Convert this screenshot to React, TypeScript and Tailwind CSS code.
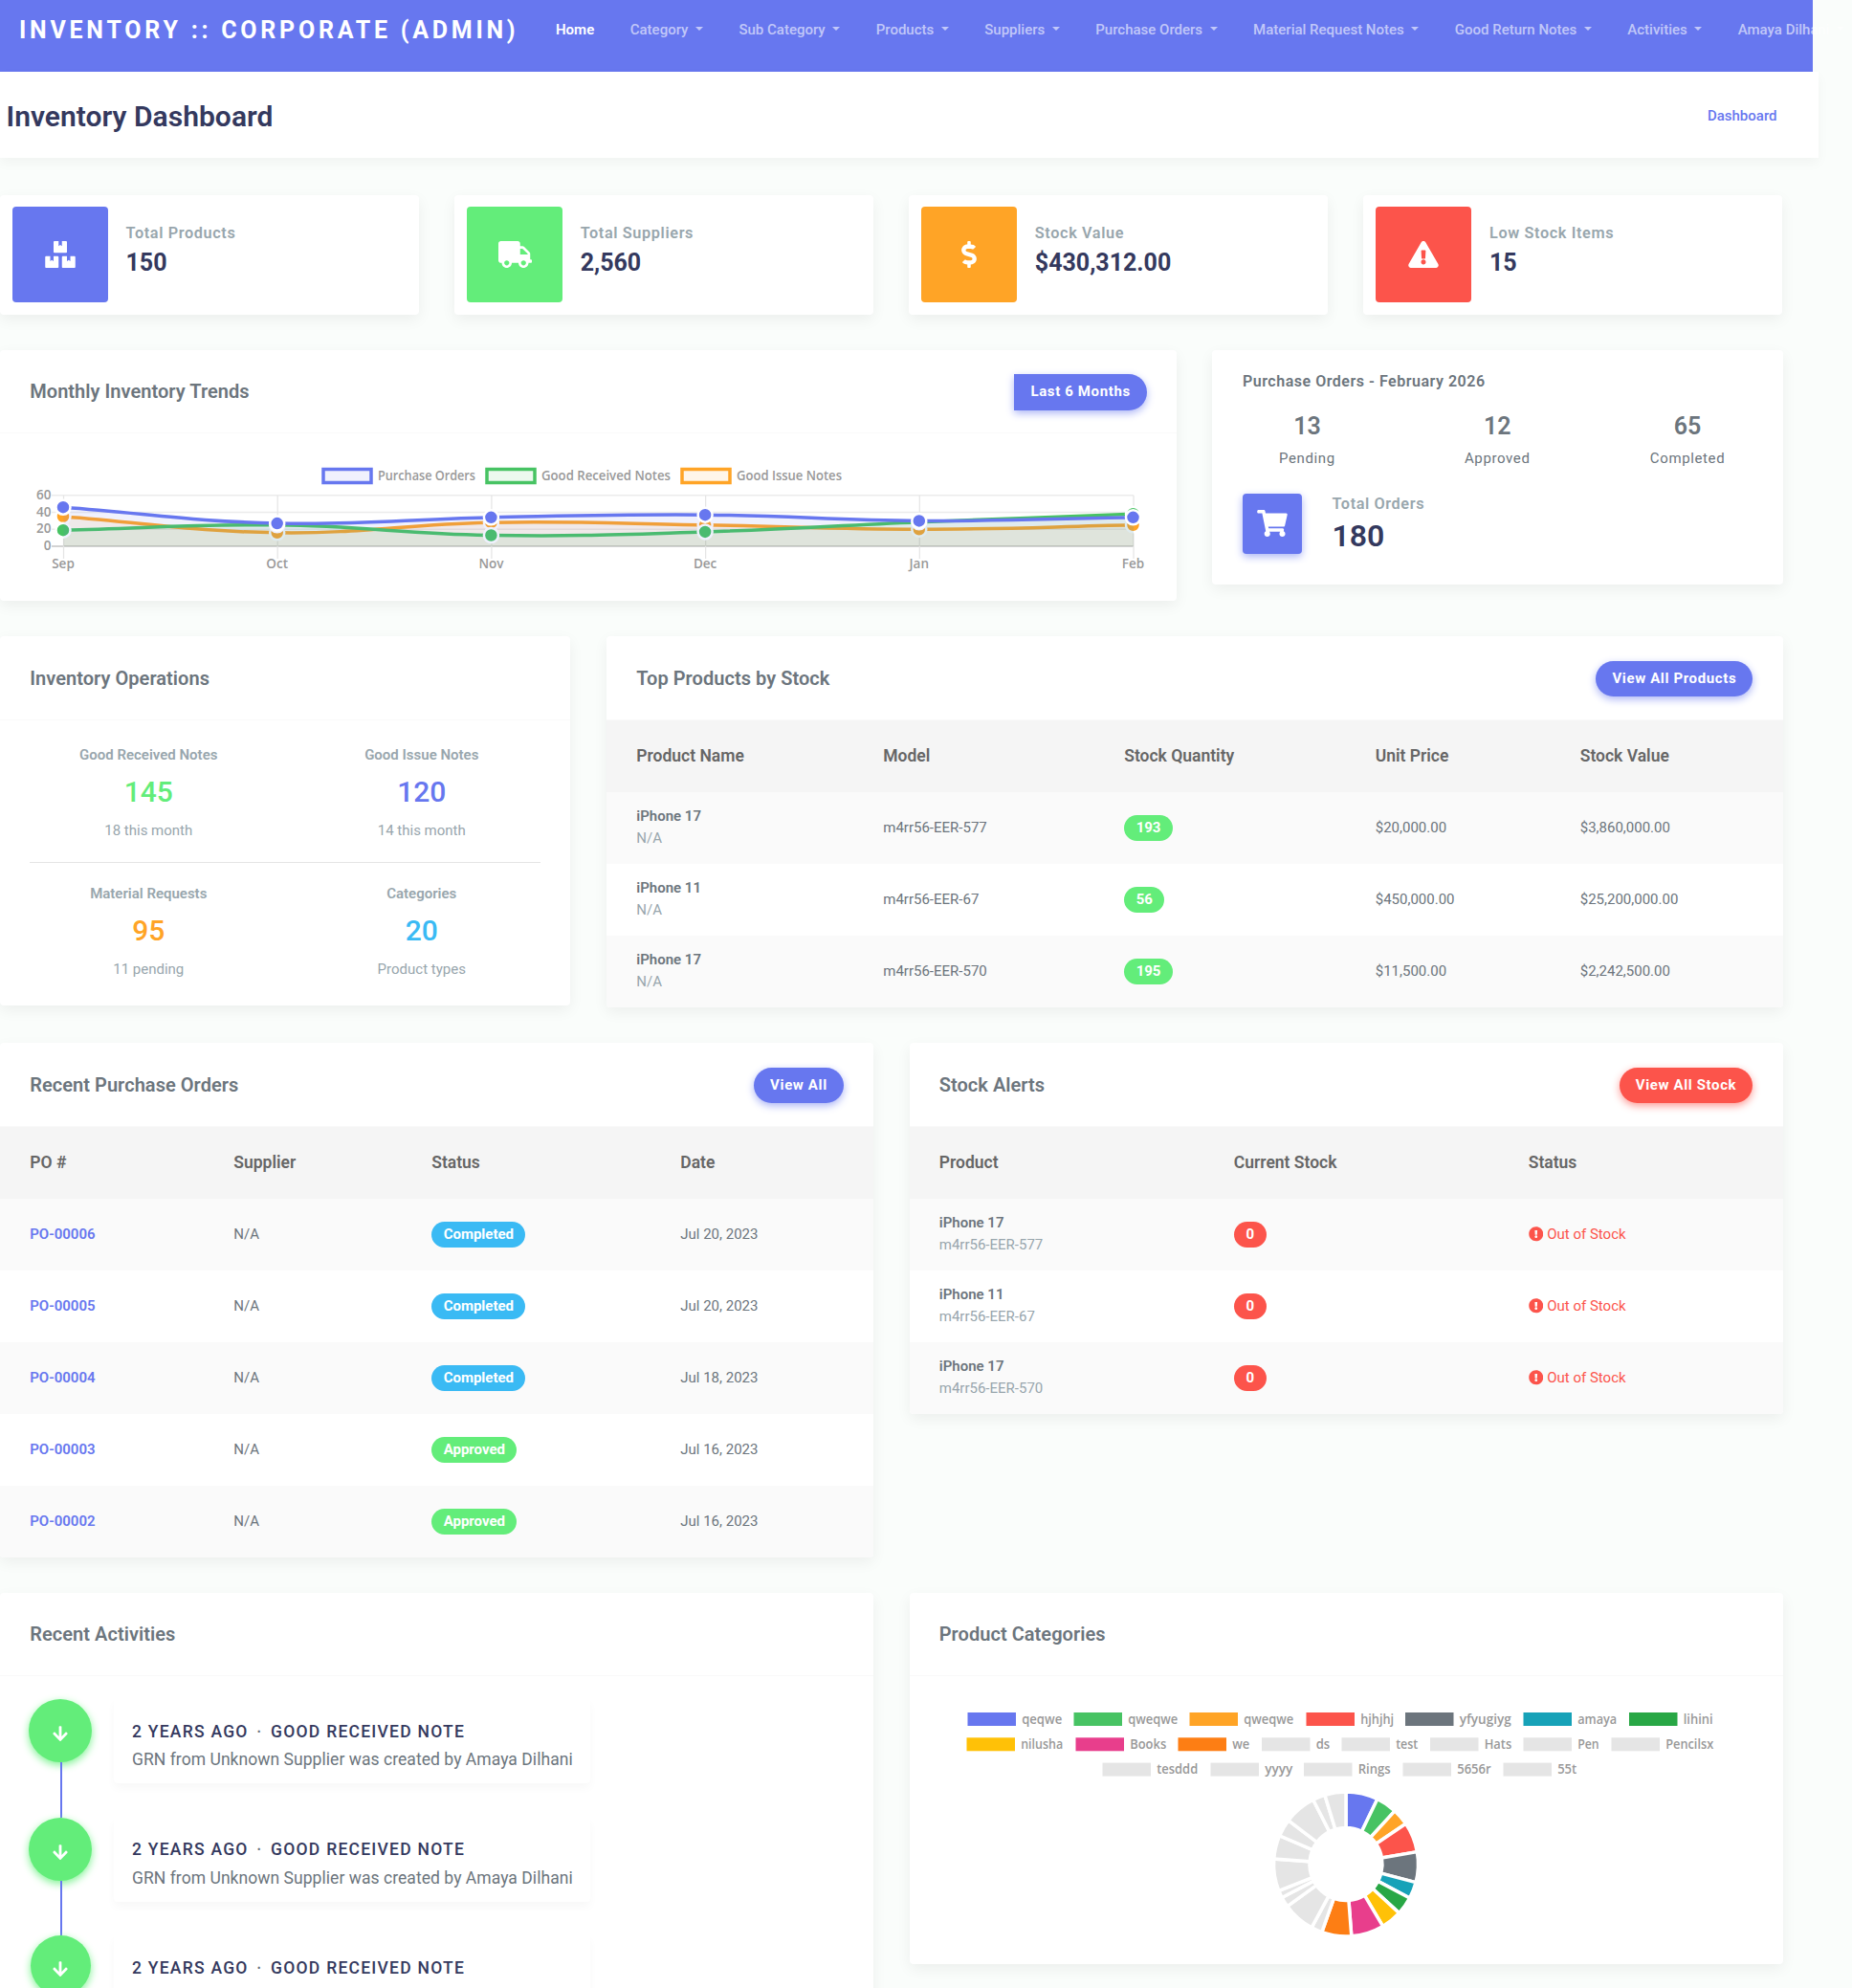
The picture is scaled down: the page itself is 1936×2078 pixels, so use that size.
import type { ReactNode } from 'react';
import {
	FaArrowDown,
	FaBoxes,
	FaDollarSign,
	FaExclamationCircle,
	FaExclamationTriangle,
	FaShoppingCart,
	FaTruck,
} from 'react-icons/fa';

const NAV_LINKS = [
	'Category',
	'Sub Category',
	'Products',
	'Suppliers',
	'Purchase Orders',
	'Material Request Notes',
	'Good Return Notes',
	'Activities',
	'Amaya Dilhani',
];

const STATS = [
	{ label: 'Total Products', value: '150', color: 'bg-[#6777ef]', icon: <FaBoxes className="h-7 w-8" /> },
	{ label: 'Total Suppliers', value: '2,560', color: 'bg-[#63ed7a]', icon: <FaTruck className="h-7 w-[35px]" /> },
	{ label: 'Stock Value', value: '$430,312.00', color: 'bg-[#ffa426]', icon: <FaDollarSign className="h-7 w-4" /> },
	{
		label: 'Low Stock Items',
		value: '15',
		color: 'bg-[#fc544b]',
		icon: <FaExclamationTriangle className="h-7 w-8" />,
	},
];

const ORDER_STATS = [
	{ label: 'Pending', value: 13 },
	{ label: 'Approved', value: 12 },
	{ label: 'Completed', value: 65 },
];

const PRODUCTS = [
	{ name: 'iPhone 17', model: 'm4rr56-EER-577', qty: 193, price: '$20,000.00', value: '$3,860,000.00' },
	{ name: 'iPhone 11', model: 'm4rr56-EER-67', qty: 56, price: '$450,000.00', value: '$25,200,000.00' },
	{ name: 'iPhone 17', model: 'm4rr56-EER-570', qty: 195, price: '$11,500.00', value: '$2,242,500.00' },
];

const ORDERS = [
	{ id: 'PO-00006', status: 'Completed', date: 'Jul 20, 2023' },
	{ id: 'PO-00005', status: 'Completed', date: 'Jul 20, 2023' },
	{ id: 'PO-00004', status: 'Completed', date: 'Jul 18, 2023' },
	{ id: 'PO-00003', status: 'Approved', date: 'Jul 16, 2023' },
	{ id: 'PO-00002', status: 'Approved', date: 'Jul 16, 2023' },
];

const MONTHS = ['Sep', 'Oct', 'Nov', 'Dec', 'Jan', 'Feb'];

const SERIES = [
	{ name: 'Purchase Orders', color: '#6777ef', data: [46, 27, 34, 37, 30, 34], x: 338, width: 102 },
	{ name: 'Good Received Notes', color: '#47c363', data: [19, 25, 13, 17, 28.5, 38], x: 509, width: 135 },
	{ name: 'Good Issue Notes', color: '#ffa426', data: [35, 16, 28, 25, 20, 25], x: 713, width: 110 },
];

// x is the left edge of the legend swatch, width the length of its label
const CATEGORY_LEGEND = [
	[
		{ name: 'qeqwe', color: '#6777ef', x: 60, width: 42 },
		{ name: 'qweqwe', color: '#47c363', x: 171, width: 52 },
		{ name: 'qweqwe', color: '#ffa426', x: 292, width: 52 },
		{ name: 'hjhjhj', color: '#fc544b', x: 414, width: 35 },
		{ name: 'yfyugiyg', color: '#6c757d', x: 517.5, width: 54 },
		{ name: 'amaya', color: '#17a2b8', x: 641, width: 41 },
		{ name: 'lihini', color: '#28a745', x: 751.5, width: 31 },
	],
	[
		{ name: 'nilusha', color: '#ffc107', x: 59, width: 44 },
		{ name: 'Books', color: '#e83e8c', x: 173, width: 38 },
		{ name: 'we', color: '#fd7e14', x: 280, width: 18 },
		{ name: 'ds', color: '#e5e5e5', x: 367.5, width: 14.5 },
		{ name: 'test', color: '#e5e5e5', x: 451, width: 23 },
		{ name: 'Hats', color: '#e5e5e5', x: 543.5, width: 28.5 },
		{ name: 'Pen', color: '#e5e5e5', x: 641, width: 22.5 },
		{ name: 'Pencilsx', color: '#e5e5e5', x: 733, width: 50 },
	],
	[
		{ name: 'tesddd', color: '#e5e5e5', x: 201, width: 43 },
		{ name: 'yyyy', color: '#e5e5e5', x: 314, width: 29 },
		{ name: 'Rings', color: '#e5e5e5', x: 411.5, width: 34 },
		{ name: '5656r', color: '#e5e5e5', x: 515, width: 35.5 },
		{ name: '55t', color: '#e5e5e5', x: 620, width: 20 },
	],
];

const CATEGORY_SHARES = [
	25.8, 16.8, 13.4, 24.2, 24.5, 13.4, 14.5, 16.7, 26.3, 23.9, 8.9, 25.9, 8.1, 5.9, 25.8, 19.1, 14, 25.8, 10, 17,
];

const CHART_FONT = '"Open Sans", "Noto Sans", sans-serif';

function Card({ children, className = '' }: { children: ReactNode; className?: string }) {
	return (
		<section
			className={`rounded-[4px] bg-white shadow-[0_5px_15px_rgba(0,0,0,0.06)] ${className}`}
		>
			{children}
		</section>
	);
}

function CardHeader({ title, children }: { title: string; children?: ReactNode }) {
	return (
		<div className="flex h-[87.5px] items-center justify-between border-b border-[#f9f9f9] px-[31.25px] pt-[2px]">
			<h4 className="text-[20px] font-semibold leading-[35px] tracking-[0.04px] text-[#6c757d]">{title}</h4>
			{children}
		</div>
	);
}

function Pill({ children, className }: { children: ReactNode; className: string }) {
	return (
		<a
			className={`flex h-[37.5px] items-center px-[17px] pb-px text-[15px] font-bold tracking-[0.625px] text-white ${className}`}
		>
			{children}
		</a>
	);
}

function Badge({ children, className }: { children: ReactNode; className: string }) {
	return (
		<span
			className={`inline-flex h-[27px] min-w-[34px] items-center justify-center rounded-full px-[12.4px] align-middle text-[15px] font-bold text-white ${className}`}
		>
			{children}
		</span>
	);
}

function Table({ heads, widths, children }: { heads: string[]; widths: number[]; children: ReactNode }) {
	return (
		<table className="w-full table-fixed border-collapse text-left text-[15px] text-[#6c757d]">
			<colgroup>
				{widths.map((w, i) => (
					<col key={i} style={{ width: w }} />
				))}
			</colgroup>
			<thead>
				<tr className="h-[75px] bg-[#f5f5f5] text-[17.5px] text-[#666]">
					{heads.map((h) => (
						<th key={h} className="px-[31.25px] font-semibold">
							{h}
						</th>
					))}
				</tr>
			</thead>
			<tbody>{children}</tbody>
		</table>
	);
}

const ROW = 'h-[75px] odd:bg-[#fafafa]';
const CELL = 'px-[31.25px] py-0 align-middle whitespace-nowrap';

function ProductCell({ name, sub }: { name: string; sub: string }) {
	return (
		<td className={CELL}>
			<div className="font-semibold leading-[23px]">{name}</div>
			<div className="leading-[23px] text-[#98a6ad]">{sub}</div>
		</td>
	);
}

function Navbar() {
	return (
		<nav className="flex h-[75px] w-[1895px] items-start bg-[#6777ef] pl-5 pt-[13px] whitespace-nowrap">
			<a className="mt-px w-[542px] shrink-0 text-[25px] font-bold leading-9 tracking-[3.75px] text-white">
				INVENTORY :: CORPORATE (ADMIN)
			</a>
			<div className="flex gap-[37.5px] pl-[19px] text-[15px] font-medium leading-9 text-white/60">
				<a className="font-semibold text-white">Home</a>
				{NAV_LINKS.map((link) => (
					<a key={link} className="flex shrink-0 items-center gap-[7.5px]">
						{link}
						<span className="mb-0.5 border-x-[4.5px] border-t-[4.5px] border-x-transparent border-t-white/60" />
					</a>
				))}
			</div>
		</nav>
	);
}

function StatCard({ label, value, color, icon }: (typeof STATS)[number]) {
	return (
		<Card className="flex h-[125px] w-[438px] pl-[13px] pt-3">
			<div className={`flex size-[100px] items-center justify-center rounded-[4px] text-white ${color}`}>
				{icon}
			</div>
			<div className="pl-[18.5px] pt-4">
				<div className="text-[16.25px] font-semibold leading-6 tracking-[0.625px] text-[#98a6ad]">{label}</div>
				<div className="pt-px text-[25px] font-bold leading-9 text-[#34395e]">{value}</div>
			</div>
		</Card>
	);
}

const px = (i: number) => 66.5 + i * 223.7;
const py = (v: number) => 118 - v * 0.887;

// Cubic spline through the points, control points scaled by neighbour distance
function splinePath(data: number[]) {
	const pts = data.map((v, i) => ({ x: px(i), y: py(v) }));
	const ctrl = pts.map((p, i) => {
		const prev = pts[i - 1] ?? p;
		const next = pts[i + 1] ?? p;
		const d01 = Math.hypot(p.x - prev.x, p.y - prev.y);
		const d12 = Math.hypot(next.x - p.x, next.y - p.y);
		const fa = (0.4 * d01) / (d01 + d12);
		const fb = (0.4 * d12) / (d01 + d12);
		return {
			ax: p.x - fa * (next.x - prev.x),
			ay: p.y - fa * (next.y - prev.y),
			bx: p.x + fb * (next.x - prev.x),
			by: p.y + fb * (next.y - prev.y),
		};
	});
	return pts
		.map((p, i) =>
			i === 0
				? `M${p.x} ${p.y}`
				: `C${ctrl[i - 1].bx} ${ctrl[i - 1].by} ${ctrl[i].ax} ${ctrl[i].ay} ${p.x} ${p.y}`,
		)
		.join('');
}

function TrendsChart() {
	return (
		<svg width="1230" height="175" className="block" fontFamily={CHART_FONT} fontSize="13.5" fontWeight="600" fill="#999">
			{SERIES.map((s) => (
				<g key={s.name}>
					<rect x={s.x} y="37.5" width="50" height="14" fill={s.color} fillOpacity="0.1" stroke={s.color} strokeWidth="3.5" />
					<text x={s.x + 57} y="49" textLength={s.width} lengthAdjust="spacingAndGlyphs">
						{s.name}
					</text>
				</g>
			))}
			{[60, 40, 20, 0].map((v) => (
				<g key={v}>
					<line x1="54" x2="1185" y1={py(v)} y2={py(v)} stroke={v === 0 ? '#c4c4c4' : '#ececec'} strokeWidth="1.5" />
					<text x="53.5" y={py(v) + 4} textAnchor="end">
						{v}
					</text>
				</g>
			))}
			{MONTHS.map((m, i) => (
				<g key={m}>
					<line x1={px(i)} x2={px(i)} y1={py(60)} y2="131" stroke="#e5e5e5" strokeWidth="1.25" />
					<text x={px(i) - 0.5} y="140.5" textAnchor="middle">
						{m}
					</text>
				</g>
			))}
			{[...SERIES].reverse().map((s) => (
				<g key={s.name}>
					<path d={`${splinePath(s.data)}V${py(0)}H${px(0)}Z`} fill={s.color} fillOpacity="0.1" />
					<path d={splinePath(s.data)} fill="none" stroke={s.color} strokeWidth="3.5" />
					{s.data.map((v, i) => (
						<circle key={i} cx={px(i) - 0.5} cy={py(v)} r="7.5" fill={s.color} stroke="#fff" strokeWidth="2.5" />
					))}
				</g>
			))}
		</svg>
	);
}

function slicePath(from: number, to: number) {
	const point = (deg: number, r: number) => {
		const a = (deg * Math.PI) / 180;
		return `${456 + r * Math.sin(a)} ${196.5 - r * Math.cos(a)}`;
	};
	return `M${point(from, 75.5)}A75.5 75.5 0 0 1 ${point(to, 75.5)}L${point(to, 38)}A38 38 0 0 0 ${point(from, 38)}Z`;
}

function CategoriesChart() {
	const colors = CATEGORY_LEGEND.flat().map((c) => c.color);
	const total = CATEGORY_SHARES.reduce((a, b) => a + b, 0);
	let angle = 0;
	return (
		<svg width="913" height="300" className="block" fontFamily={CHART_FONT} fontSize="13.5" fontWeight="600" fill="#999">
			{CATEGORY_LEGEND.map((row, r) =>
				row.map((c) => (
					<g key={`${c.name}${c.x}`}>
						<rect x={c.x + 0.5} y={38 + r * 26.3} width="50.5" height="14" fill={c.color} />
						<text x={c.x + 57.2} y={49.5 + r * 26.3} textLength={c.width} lengthAdjust="spacingAndGlyphs">
							{c.name}
						</text>
					</g>
				)),
			)}
			{CATEGORY_SHARES.map((share, i) => {
				const from = angle;
				angle += (share / total) * 360;
				return <path key={i} d={slicePath(from, angle)} fill={colors[i]} stroke="#fff" strokeWidth="3.5" />;
			})}
		</svg>
	);
}

function Operation({ label, value, note, color }: { label: string; value: string; note: string; color: string }) {
	return (
		<div className="w-[285.5px] text-center">
			<div className="text-[15px] font-semibold leading-6 text-[#98a6ad]">{label}</div>
			<div className={`pt-2 text-[30px] font-medium leading-[38px] ${color}`}>{value}</div>
			<div className="pt-[9px] text-[15px] leading-6 text-[#98a6ad]">{note}</div>
		</div>
	);
}

function Activity({ small, last }: { small?: boolean; last?: boolean }) {
	return (
		<div className="flex h-[123.5px]">
			<div className="flex w-[66px] flex-col items-center">
				<div
					className={`flex shrink-0 items-center justify-center rounded-full bg-[#63ed7a] pt-1.5 text-white shadow-[0_3px_8px_#81f394] ${small ? 'size-[63px]' : 'size-[66px]'}`}
				>
					<FaArrowDown className="h-[18px] w-4" />
				</div>
				{!last && <div className="ml-[2px] w-[2px] grow bg-[#6777ef]" />}
			</div>
			<div className="ml-[23px] h-[88px] w-[498px] rounded-[4px] bg-white px-[19px] pt-[20.5px] whitespace-nowrap shadow-[0_5px_10px_rgba(0,0,0,0.03)]">
				<div className="text-[17.5px] font-medium leading-[26px] tracking-[1.25px] text-[#34395e]">
					2 YEARS AGO <span className="mx-[3px] text-[#6c757d]">·</span> GOOD RECEIVED NOTE
				</div>
				<div className="pt-[2.5px] text-[17.5px] leading-[28px] tracking-[0.05px] text-[#6c757d]">
					GRN from Unknown Supplier was created by Amaya Dilhani
				</div>
			</div>
		</div>
	);
}

export default function App() {
	return (
		<div className="h-[2078px] w-[1936px] overflow-hidden bg-[#fafdfb] font-['Roboto',sans-serif] text-[#6c757d]">
			<Navbar />
			<header className="flex h-[90px] w-[1901px] items-center justify-between bg-white pl-[6.5px] pr-[43.5px] pt-[2px] shadow-[0_5px_12px_rgba(0,0,0,0.04)]">
				<h1 className="text-[30px] font-semibold tracking-[0.03px] text-[#34395e]">Inventory Dashboard</h1>
				<a className="text-[15px] font-medium text-[#6777ef]">Dashboard</a>
			</header>

			<main className="flex w-[1863.5px] flex-col gap-[37px] pt-[38.5px]">
				<div className="flex justify-between">
					{STATS.map((s) => (
						<StatCard key={s.label} {...s} />
					))}
				</div>

				<div className="flex items-start justify-between">
					<Card className="h-[262.5px] w-[1230px]">
						<CardHeader title="Monthly Inventory Trends">
							<Pill className="rounded-r-full bg-[#6777ef] shadow-[0_3px_8px_#acb5f6]">Last 6 Months</Pill>
						</CardHeader>
						<TrendsChart />
					</Card>
					<Card className="h-[245px] w-[596.5px] pt-[21px]">
						<div className="pl-8 text-[16px] font-semibold leading-6 tracking-[0.52px]">
							Purchase Orders - February 2026
						</div>
						<div className="grid grid-cols-3 pt-[17px] text-center">
							{ORDER_STATS.map((o) => (
								<div key={o.label}>
									<div className="text-[25px] font-semibold leading-9">{o.value}</div>
									<div className="pt-[3px] text-[15px] leading-6 tracking-[0.625px]">{o.label}</div>
								</div>
							))}
						</div>
						<div className="flex pl-8 pt-[25.5px]">
							<div className="flex h-[62.5px] w-[62px] items-center justify-center rounded-[4px] bg-[#6777ef] text-white shadow-[0_3px_8px_#acb5f6]">
								<FaShoppingCart className="h-7 w-8" />
							</div>
							<div className="-mt-px pl-[31.5px]">
								<div className="text-[16.25px] font-semibold leading-6 tracking-[0.6px] text-[#98a6ad]">
									Total Orders
								</div>
								<div className="pt-px text-[32px] font-semibold leading-10 text-[#34395e]">180</div>
							</div>
						</div>
					</Card>
				</div>

				<div className="flex items-start justify-between">
					<Card className="h-[386px] w-[596px]">
						<CardHeader title="Inventory Operations" />
						<div className="px-[31px] pt-[24px]">
							<div className="-mx-[18.5px] flex justify-center">
								<Operation label="Good Received Notes" value="145" note="18 this month" color="text-[#63ed7a]" />
								<Operation label="Good Issue Notes" value="120" note="14 this month" color="text-[#6777ef]" />
							</div>
							<hr className="mb-5 mt-[21px] border-[#e5e5e5]" />
							<div className="-mx-[18.5px] flex justify-center">
								<Operation label="Material Requests" value="95" note="11 pending" color="text-[#ffa426]" />
								<Operation label="Categories" value="20" note="Product types" color="text-[#3abaf4]" />
							</div>
						</div>
					</Card>
					<Card className="h-[388px] w-[1229.5px] overflow-hidden">
						<CardHeader title="Top Products by Stock">
							<Pill className="rounded-full bg-[#6777ef] shadow-[0_3px_8px_#acb5f6]">View All Products</Pill>
						</CardHeader>
						<Table
							heads={['Product Name', 'Model', 'Stock Quantity', 'Unit Price', 'Stock Value']}
							widths={[258, 252, 262.5, 214, 243]}
						>
							{PRODUCTS.map((p) => (
								<tr key={p.model} className={ROW}>
									<ProductCell name={p.name} sub="N/A" />
									<td className={CELL}>{p.model}</td>
									<td className={CELL}>
										<Badge className="bg-[#63ed7a]">{p.qty}</Badge>
									</td>
									<td className={CELL}>{p.price}</td>
									<td className={CELL}>{p.value}</td>
								</tr>
							))}
						</Table>
					</Card>
				</div>

				<div className="flex items-start justify-between">
					<Card className="w-[913px] overflow-hidden">
						<CardHeader title="Recent Purchase Orders">
							<Pill className="rounded-full bg-[#6777ef] shadow-[0_3px_8px_#acb5f6]">View All</Pill>
						</CardHeader>
						<Table heads={['PO #', 'Supplier', 'Status', 'Date']} widths={[213, 207, 260, 233]}>
							{ORDERS.map((o) => (
								<tr key={o.id} className={ROW}>
									<td className={`${CELL} font-semibold text-[#6777ef]`}>{o.id}</td>
									<td className={CELL}>N/A</td>
									<td className={CELL}>
										<Badge className={o.status === 'Completed' ? 'bg-[#3abaf4]' : 'bg-[#63ed7a]'}>
											{o.status}
										</Badge>
									</td>
									<td className={CELL}>{o.date}</td>
								</tr>
							))}
						</Table>
					</Card>
					<Card className="w-[913px] overflow-hidden">
						<CardHeader title="Stock Alerts">
							<Pill className="rounded-full bg-[#fc544b] shadow-[0_3px_8px_#fd9b96]">View All Stock</Pill>
						</CardHeader>
						<Table heads={['Product', 'Current Stock', 'Status']} widths={[308, 308, 297]}>
							{PRODUCTS.map((p) => (
								<tr key={p.model} className={ROW}>
									<ProductCell name={p.name} sub={p.model} />
									<td className={CELL}>
										<Badge className="bg-[#fc544b]">0</Badge>
									</td>
									<td className={CELL}>
										<span className="flex items-center gap-1 text-[#fc544b]">
											<FaExclamationCircle className="size-[15.5px]" /> Out of Stock
										</span>
									</td>
								</tr>
							))}
						</Table>
					</Card>
				</div>

				<div className="flex items-start justify-between">
					<Card className="h-[500px] w-[913px]">
						<CardHeader title="Recent Activities" />
						<div className="pl-[30px] pt-6">
							<Activity />
							<Activity />
							<Activity small last />
						</div>
					</Card>
					<Card className="h-[388px] w-[913px]">
						<CardHeader title="Product Categories" />
						<CategoriesChart />
					</Card>
				</div>
			</main>
		</div>
	);
}
